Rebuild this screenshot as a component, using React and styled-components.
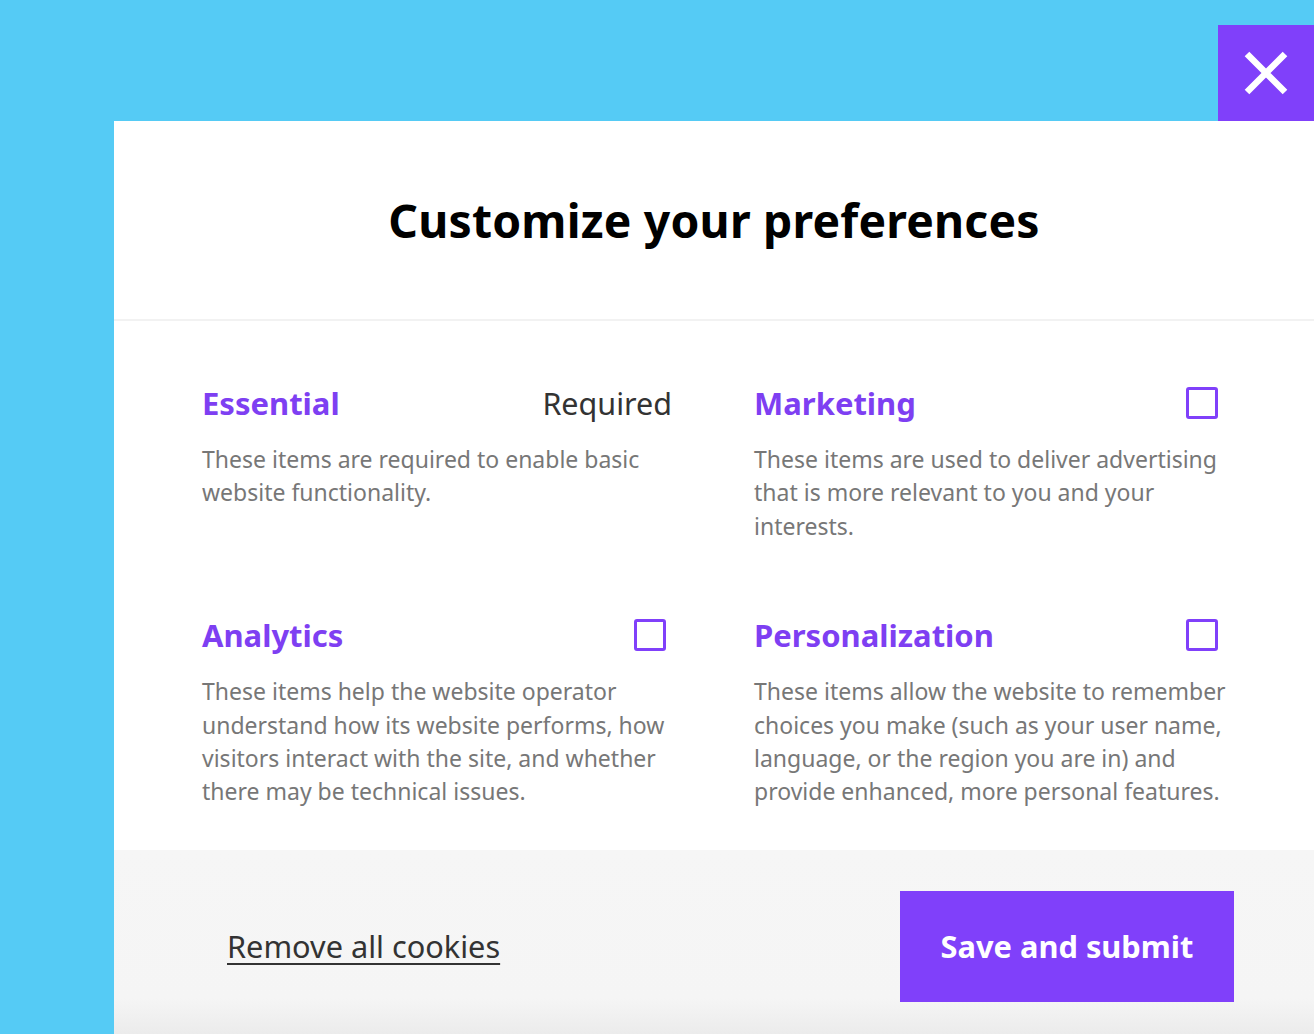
import React, { useState } from "react";
import styled, { createGlobalStyle } from "styled-components";

const GlobalStyle = createGlobalStyle`
  html, body {
    margin: 0;
    padding: 0;
    height: 100%;
    overflow: hidden;
  }
  body {
    background: #55cbf5;
    font-family: "Noto Sans", "Open Sans", sans-serif;
  }
`;

const purple = "#8040fa";

const categories = [
  {
    id: "essential",
    title: "Essential",
    required: true,
    text: "These items are required to enable basic website functionality.",
  },
  {
    id: "marketing",
    title: "Marketing",
    text: "These items are used to deliver advertising that is more relevant to you and your interests.",
  },
  {
    id: "analytics",
    title: "Analytics",
    text: "These items help the website operator understand how its website performs, how visitors interact with the site, and whether there may be technical issues.",
  },
  {
    id: "personalization",
    title: "Personalization",
    text: "These items allow the website to remember choices you make (such as your user name, language, or the region you are in) and provide enhanced, more personal features.",
  },
];

function Preferences() {
  const [checked, setChecked] = useState({});

  const toggle = (id) => {
    setChecked({ ...checked, [id]: !checked[id] });
  };

  return (
    <Page>
      <GlobalStyle />
      <Modal>
        <CloseButton aria-label="Close">
          <svg width="46" height="46" viewBox="0 0 46 46">
            <path d="M4 4 L42 42 M42 4 L4 42" stroke="#fff" strokeWidth="6.5" />
          </svg>
        </CloseButton>

        <Header>
          <Title>Customize your preferences</Title>
        </Header>

        <Body>
          {categories.map((item) => (
            <Item key={item.id}>
              <ItemHead>
                <ItemTitle>{item.title}</ItemTitle>
                {item.required ? (
                  <Required>Required</Required>
                ) : (
                  <Check
                    type="checkbox"
                    checked={!!checked[item.id]}
                    onChange={() => toggle(item.id)}
                  />
                )}
              </ItemHead>
              <ItemText>{item.text}</ItemText>
            </Item>
          ))}
        </Body>

        <Footer>
          <RemoveLink href="#">Remove all cookies</RemoveLink>
          <SaveButton type="button">Save and submit</SaveButton>
        </Footer>
      </Modal>
    </Page>
  );
}

const Page = styled.div`
  min-height: 100vh;
  padding: 121px 0 0 114px;
  box-sizing: border-box;
`;

const Modal = styled.div`
  position: relative;
  width: 1200px;
  background: #fff;
`;

const CloseButton = styled.button`
  position: absolute;
  top: -96px;
  right: 0;
  width: 96px;
  height: 96px;
  border: none;
  padding: 0;
  background: ${purple};
  display: flex;
  align-items: center;
  justify-content: center;
  cursor: pointer;
`;

const Header = styled.header`
  height: 200px;
  display: flex;
  align-items: center;
  justify-content: center;
  border-bottom: 2px solid #f2f2f2;
  box-sizing: border-box;
`;

const Title = styled.h1`
  margin: 0;
  font-size: 46.3px;
  font-weight: 700;
  color: #000;
  letter-spacing: 0.2px;
`;

const Body = styled.section`
  display: grid;
  grid-template-columns: 464px 464px;
  column-gap: 88px;
  row-gap: 72px;
  padding: 62px 88px 41px;
`;

const Item = styled.div`
  display: flex;
  flex-direction: column;
  gap: 20px;
`;

const ItemHead = styled.div`
  display: flex;
  align-items: center;
  justify-content: space-between;
  height: 40px;
`;

const ItemTitle = styled.h2`
  margin: 0;
  font-size: 31px;
  font-weight: 700;
  color: #7e3ff2;
  line-height: 40px;
`;

const Required = styled.span`
  margin-right: -6px;
  font-size: 30.5px;
  color: #333;
  line-height: 40px;
`;

const Check = styled.input`
  appearance: none;
  margin: 0;
  width: 32px;
  height: 32px;
  border: 3px solid ${purple};
  border-radius: 3px;
  box-sizing: border-box;
  background: #fff;
  cursor: pointer;

  &:checked {
    background: ${purple};
  }
`;

const ItemText = styled.p`
  margin: 0;
  margin-right: -14px;
  font-size: 23px;
  line-height: 33.4px;
  color: #777;
`;

const Footer = styled.footer`
  display: flex;
  align-items: center;
  justify-content: space-between;
  padding: 41px 80px 60px 113px;
  background: linear-gradient(to bottom, #f6f6f6 0%, #f5f5f5 70%, #e4e4e4 100%);
`;

const RemoveLink = styled.a`
  font-size: 30.7px;
  color: #333;
  text-decoration: underline;
  text-underline-offset: 5px;
  text-decoration-thickness: 2px;
`;

const SaveButton = styled.button`
  width: 334px;
  height: 111px;
  border: none;
  background: ${purple};
  color: #fff;
  font-family: "Noto Sans", "Open Sans", sans-serif;
  font-size: 30.8px;
  font-weight: 700;
  cursor: pointer;
`;

export default Preferences;
